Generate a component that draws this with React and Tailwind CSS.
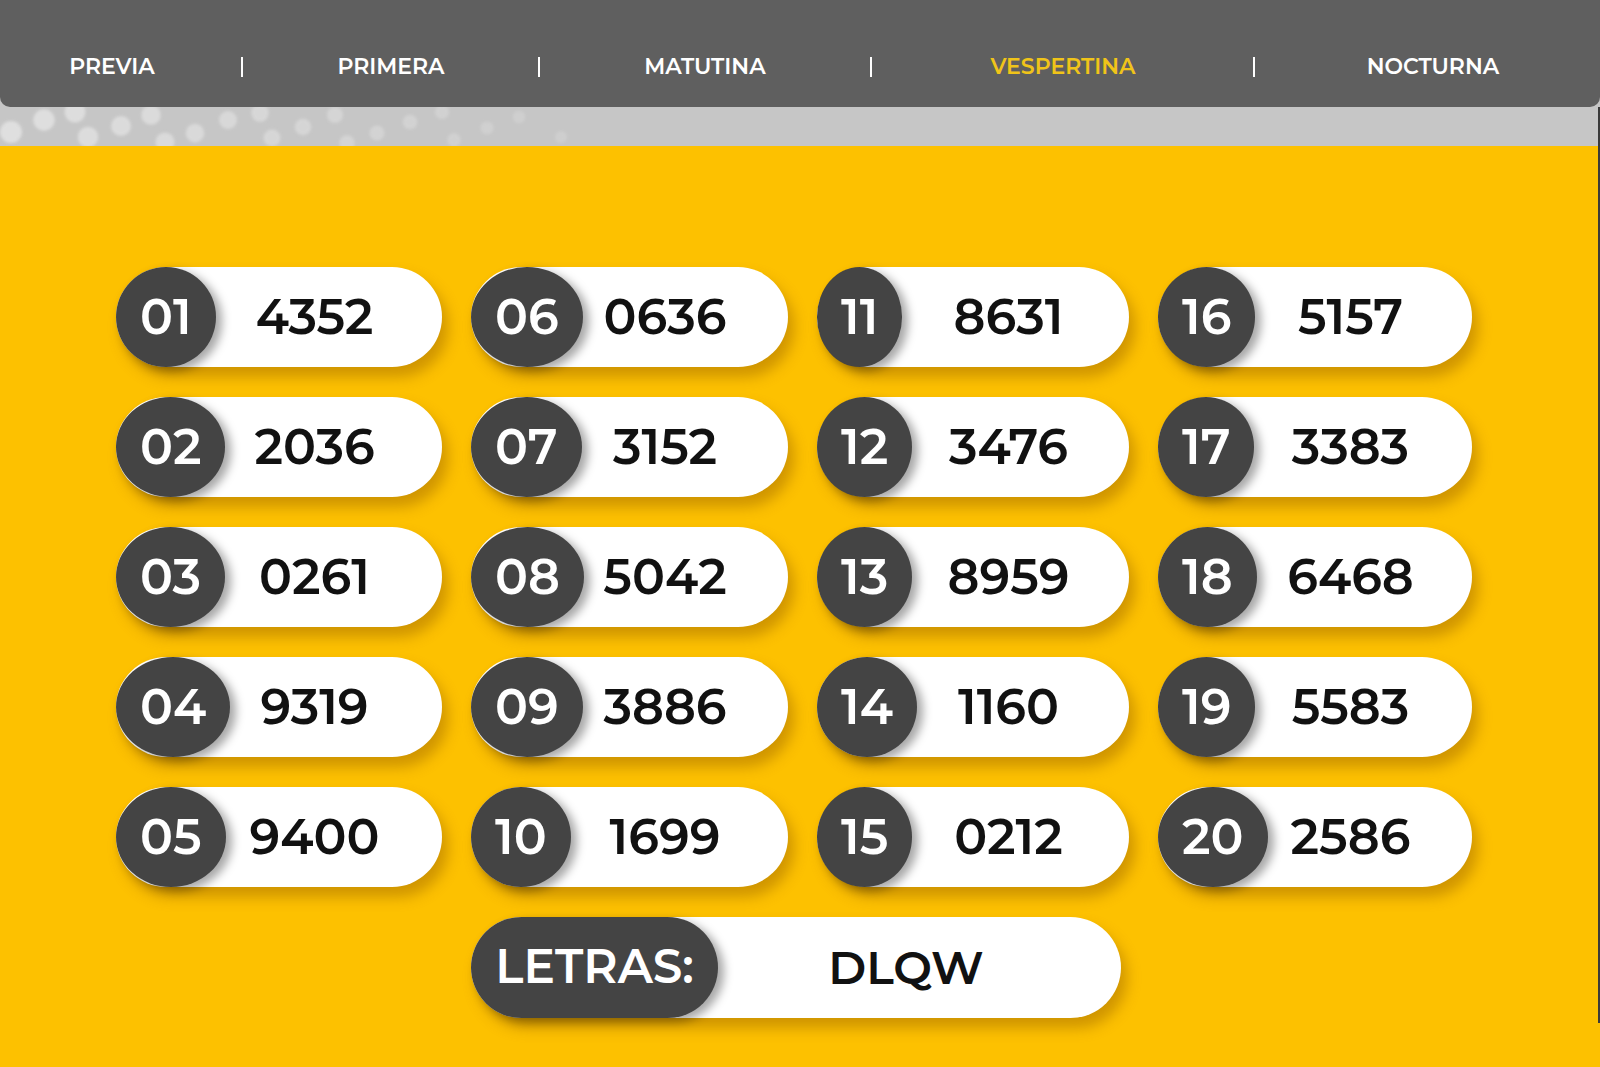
import React from "react";

const results = [
  ["01", "4352"], ["06", "0636"], ["11", "8631"], ["16", "5157"],
  ["02", "2036"], ["07", "3152"], ["12", "3476"], ["17", "3383"],
  ["03", "0261"], ["08", "5042"], ["13", "8959"], ["18", "6468"],
  ["04", "9319"], ["09", "3886"], ["14", "1160"], ["19", "5583"],
  ["05", "9400"], ["10", "1699"], ["15", "0212"], ["20", "2586"],
];

const tabs = ["PREVIA", "PRIMERA", "MATUTINA", "VESPERTINA", "NOCTURNA"];

// soft light dots on the grey band, fading out to the right
const dots = [
  [11, 25], [44, 13], [75, 5], [88, 30], [121, 19], [151, 8], [165, 35],
  [195, 26], [228, 13], [260, 6], [272, 31], [303, 20], [335, 8], [347, 36],
  [377, 26], [410, 15], [442, 5], [454, 33], [487, 21], [519, 10], [561, 30],
];

function Pill({ pos, num }) {
  return (
    <div className="grid h-[100px] w-full rounded-full bg-white shadow-[6px_10px_14px_rgba(150,95,0,0.45)]">
      <div className="col-start-1 row-start-1 flex items-center justify-center pl-[71px] text-[49px] font-semibold text-[#111]">
        {num}
      </div>
      <div className="col-start-1 row-start-1 flex h-[100px] items-center justify-self-start rounded-[50%] bg-[#444444] px-6 text-[49px] font-semibold text-white shadow-[6px_4px_10px_rgba(0,0,0,0.35)]">
        {pos}
      </div>
    </div>
  );
}

export default function App() {
  return (
    <div className="min-h-[1067px] w-[1600px] bg-[#fdc100] font-['Montserrat','Inter','Open_Sans',sans-serif]">
      {/* top nav */}
      <div className="bg-[#c6c6c6]">
        <nav className="grid h-[107px] grid-cols-[224px_36px_262px_34px_298px_34px_350px_32px_326px] items-center rounded-b-[10px] bg-[#5f5f5f] pt-[26px] text-[22px] font-semibold text-white">
          {tabs.map((t, i) => (
            <React.Fragment key={t}>
              {i > 0 && (
                <div className="flex justify-center">
                  <div className="h-[20px] w-[2px] bg-white" />
                </div>
              )}
              <div className={"text-center " + (t === "VESPERTINA" ? "text-[#f0c419]" : "")}>
                {t}
              </div>
            </React.Fragment>
          ))}
        </nav>
        <div className="flex h-[39px] border-r-2 border-[#3a3a3a]">
          <svg width="600" height="39" viewBox="0 0 600 39">
            <defs>
              <filter id="soft" x="-50%" y="-50%" width="200%" height="200%">
                <feGaussianBlur stdDeviation="1.5" />
              </filter>
            </defs>
            {dots.map(([x, y], i) => (
              <circle
                key={i}
                cx={x}
                cy={y}
                r={11 - i * 0.25}
                fill="#e2e2e2"
                opacity={Math.max(0.25, 0.9 - i * 0.03)}
                filter="url(#soft)"
              />
            ))}
          </svg>
        </div>
      </div>

      {/* results */}
      <div className="h-[877px] border-r-2 border-[#3a3a3a] pl-[116px] pt-[121px]">
        <div className="grid grid-cols-[326px_317px_312px_314px] gap-x-[29px] gap-y-[30px]">
          {results.map(([pos, num]) => (
            <Pill key={pos} pos={pos} num={num} />
          ))}
          <div className="col-span-2 col-start-2 flex h-[101px] w-[650px] items-center rounded-full bg-white shadow-[6px_10px_14px_rgba(150,95,0,0.45)]">
            <div className="flex h-full w-[247px] items-center justify-center rounded-full bg-[#444444] text-[47px] font-semibold text-white shadow-[6px_4px_10px_rgba(0,0,0,0.35)]">
              LETRAS:
            </div>
            <div className="flex-1 pr-[27px] text-center text-[46px] font-semibold text-[#111]">DLQW</div>
          </div>
        </div>
      </div>
    </div>
  );
}
